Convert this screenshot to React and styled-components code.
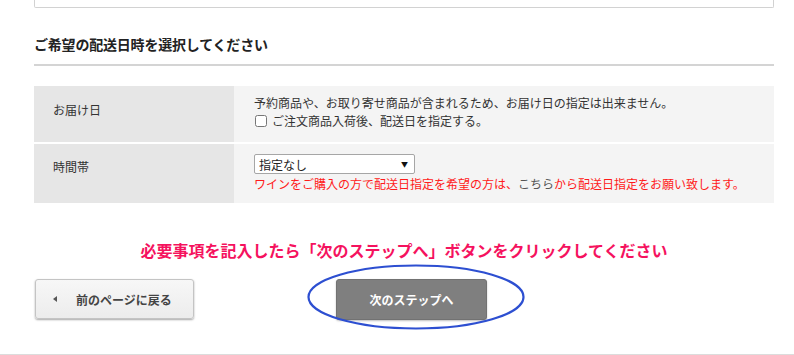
import React from "react";
import styled, { createGlobalStyle } from "styled-components";

const Global = createGlobalStyle`
  html, body { margin: 0; padding: 0; background: #fff; }
  body { font-family: "Noto Sans CJK JP", "Noto Sans", sans-serif; color: #333; overflow: hidden; }
`;

const Page = styled.div`
  width: 794px;
  height: 355px;
  border-bottom: 1px solid #dcdcdc;
  box-sizing: border-box;
`;

const Container = styled.div`
  width: 740px;
  margin-left: 34px;
`;

const TopBox = styled.div`
  height: 7px;
  border: 1px solid #d2d2d2;
  border-top: none;
  border-radius: 0 0 2px 2px;
`;

const Heading = styled.h2`
  margin: 26px 0 0;
  padding-bottom: 10px;
  border-bottom: 2px solid #d4d4d4;
  font-size: 14px;
  line-height: 20px;
  font-weight: bold;
  color: #222;
  letter-spacing: -0.2px;
`;

const Table = styled.div`
  margin-top: 20px;
  display: grid;
  grid-template-columns: 200px 1fr;
  row-gap: 2px;
`;

const Label = styled.div`
  background: #e6e6e6;
  padding: ${(p) => p.$top}px 0 0 19px;
  font-size: 12px;
  line-height: 18px;
  color: #333;
`;

const Cell = styled.div`
  background: #f4f4f4;
  padding: ${(p) => p.$pad};
  font-size: 12px;
  line-height: 18px;
  color: #333;
`;

const CheckLine = styled.label`
  display: flex;
  align-items: center;
  gap: 5px;
`;

const Check = styled.input`
  margin: 0 0 0 1px;
  width: 12px;
  height: 12px;
`;

const SelectWrap = styled.div`
  position: relative;
  width: 161px;
  height: 20px;
`;

const Select = styled.select`
  appearance: none;
  width: 100%;
  height: 100%;
  box-sizing: border-box;
  border: 1px solid #a6a6a6;
  border-radius: 2px;
  background: #fff;
  font-family: inherit;
  font-size: 12px;
  color: #222;
  padding: 0 0 0 4px;
  margin: 0;
  display: block;
`;

const Arrow = styled.span`
  position: absolute;
  right: 7px;
  top: 3px;
  font-size: 7px;
  line-height: 14px;
  color: #111;
  pointer-events: none;
`;

const Note = styled.div`
  color: #ff1a1a;
  margin-top: 1px;
`;

const NoteLink = styled.span`
  color: #555;
`;

const Message = styled.p`
  margin: 35px 0 0;
  text-align: center;
  font-size: 16px;
  line-height: 24px;
  font-weight: bold;
  color: #f5125e;
`;

const Buttons = styled.div`
  margin-top: 17px;
  display: flex;
  align-items: flex-start;
`;

const BackButton = styled.button`
  margin-left: 1px;
  width: 159px;
  height: 40px;
  box-sizing: border-box;
  border: 1px solid #c4c4c4;
  border-radius: 3px;
  background: linear-gradient(#f7f7f7, #ececec);
  box-shadow: 0 1px 2px rgba(0, 0, 0, 0.35);
  display: flex;
  align-items: center;
  padding: 0 0 0 17px;
  font-family: inherit;
  font-size: 12px;
  font-weight: bold;
  color: #444;
  cursor: pointer;
`;

const Tri = styled.span`
  width: 0;
  height: 0;
  border-top: 3px solid transparent;
  border-bottom: 3px solid transparent;
  border-right: 4px solid #555;
  margin-right: 19px;
`;

const NextWrap = styled.div`
  position: relative;
  margin-left: 142px;
`;

const NextButton = styled.button`
  width: 151px;
  height: 41px;
  box-sizing: border-box;
  border: 1px solid #727272;
  border-radius: 3px;
  background: #7f7f7f;
  box-shadow: 0 1px 2px rgba(0, 0, 0, 0.25);
  font-family: inherit;
  font-size: 12px;
  font-weight: bold;
  color: #fff;
  cursor: pointer;
  padding: 0;
`;

const Ellipse = styled.svg`
  position: absolute;
  left: -29px;
  top: -15px;
  pointer-events: none;
  overflow: visible;
`;

export default function App() {
  return (
    <>
      <Global />
      <Page>
        <Container>
          <TopBox />
          <Heading>ご希望の配送日時を選択してください</Heading>
          <Table>
            <Label $top={15}>お届け日</Label>
            <Cell $pad="8px 20px 12px 20px">
              <div>予約商品や、お取り寄せ商品が含まれるため、お届け日の指定は出来ません。</div>
              <CheckLine>
                <Check type="checkbox" />
                ご注文商品入荷後、配送日を指定する。
              </CheckLine>
            </Cell>
            <Label $top={14}>時間帯</Label>
            <Cell $pad="10px 20px 10px 20px">
              <SelectWrap>
                <Select defaultValue="none">
                  <option value="none">指定なし</option>
                </Select>
                <Arrow>▼</Arrow>
              </SelectWrap>
              <Note>
                ワインをご購入の方で配送日指定を希望の方は、<NoteLink>こちら</NoteLink>から配送日指定をお願い致します。
              </Note>
            </Cell>
          </Table>
          <Message>必要事項を記入したら「次のステップへ」ボタンをクリックしてください</Message>
          <Buttons>
            <BackButton>
              <Tri />
              前のページに戻る
            </BackButton>
            <NextWrap>
              <NextButton>次のステップへ</NextButton>
              <Ellipse width="218" height="66" viewBox="0 0 218 66">
                <ellipse cx="109" cy="33" rx="107.5" ry="31.5" fill="none" stroke="#2d4fd1" strokeWidth="2.2" />
              </Ellipse>
            </NextWrap>
          </Buttons>
        </Container>
      </Page>
    </>
  );
}
